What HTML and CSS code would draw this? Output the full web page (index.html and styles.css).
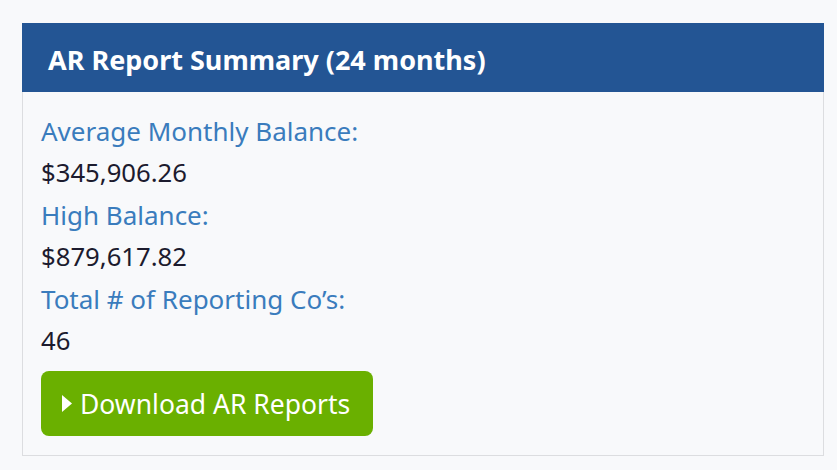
FILE: index.html
```html
<!DOCTYPE html>
<html>
<head>
<meta charset="utf-8">
<link rel="stylesheet" href="styles.css">
</head>
<body>
<div class="card">
  <div class="card-header">AR Report Summary (24 months)</div>
  <div class="card-body">
    <div class="label">Average Monthly Balance:</div>
    <div class="value">$345,906.26</div>
    <div class="label">High Balance:</div>
    <div class="value">$879,617.82</div>
    <div class="label">Total # of Reporting Co’s:</div>
    <div class="value">46</div>
    <button class="btn"><svg class="caret" width="10" height="17" viewBox="0 0 10 17"><path d="M0 0 L10 8.5 L0 17 Z" fill="#fff"/></svg>Download AR Reports</button>
  </div>
</div>
</body>
</html>
```
FILE: styles.css
```css
html, body {
  margin: 0;
  padding: 0;
  background: #f8f9fb;
}
body {
  padding: 23px 13px 0 22px;
  font-family: "Noto Sans", "Open Sans", sans-serif;
}
.card {
  width: 800px;
  border: 1px solid #dcdde0;
  border-top: none;
  background: #f8f9fb;
}
.card-header {
  background: #235594;
  color: #fff;
  font-weight: bold;
  font-size: 27px;
  height: 69px;
  display: flex;
  align-items: center;
  padding-left: 26px;
  padding-top: 3px;
  box-sizing: border-box;
  margin: 0 -1px;
}
.card-body {
  padding: 18px 18px 19px 18px;
}
.label {
  color: #3a7cbd;
  font-size: 26px;
  line-height: 42px;
}
.value {
  color: #1c1b2e;
  font-size: 25.7px;
  line-height: 42px;
}
.btn {
  margin-top: 9px;
  height: 65px;
  width: 332px;
  border: none;
  border-radius: 8px;
  background: #6ab000;
  color: #fff;
  font-family: inherit;
  font-size: 26.5px;
  display: flex;
  align-items: center;
  padding: 0 0 0 21px;
  gap: 8px;
}
.caret {
  flex: none;
}
```
